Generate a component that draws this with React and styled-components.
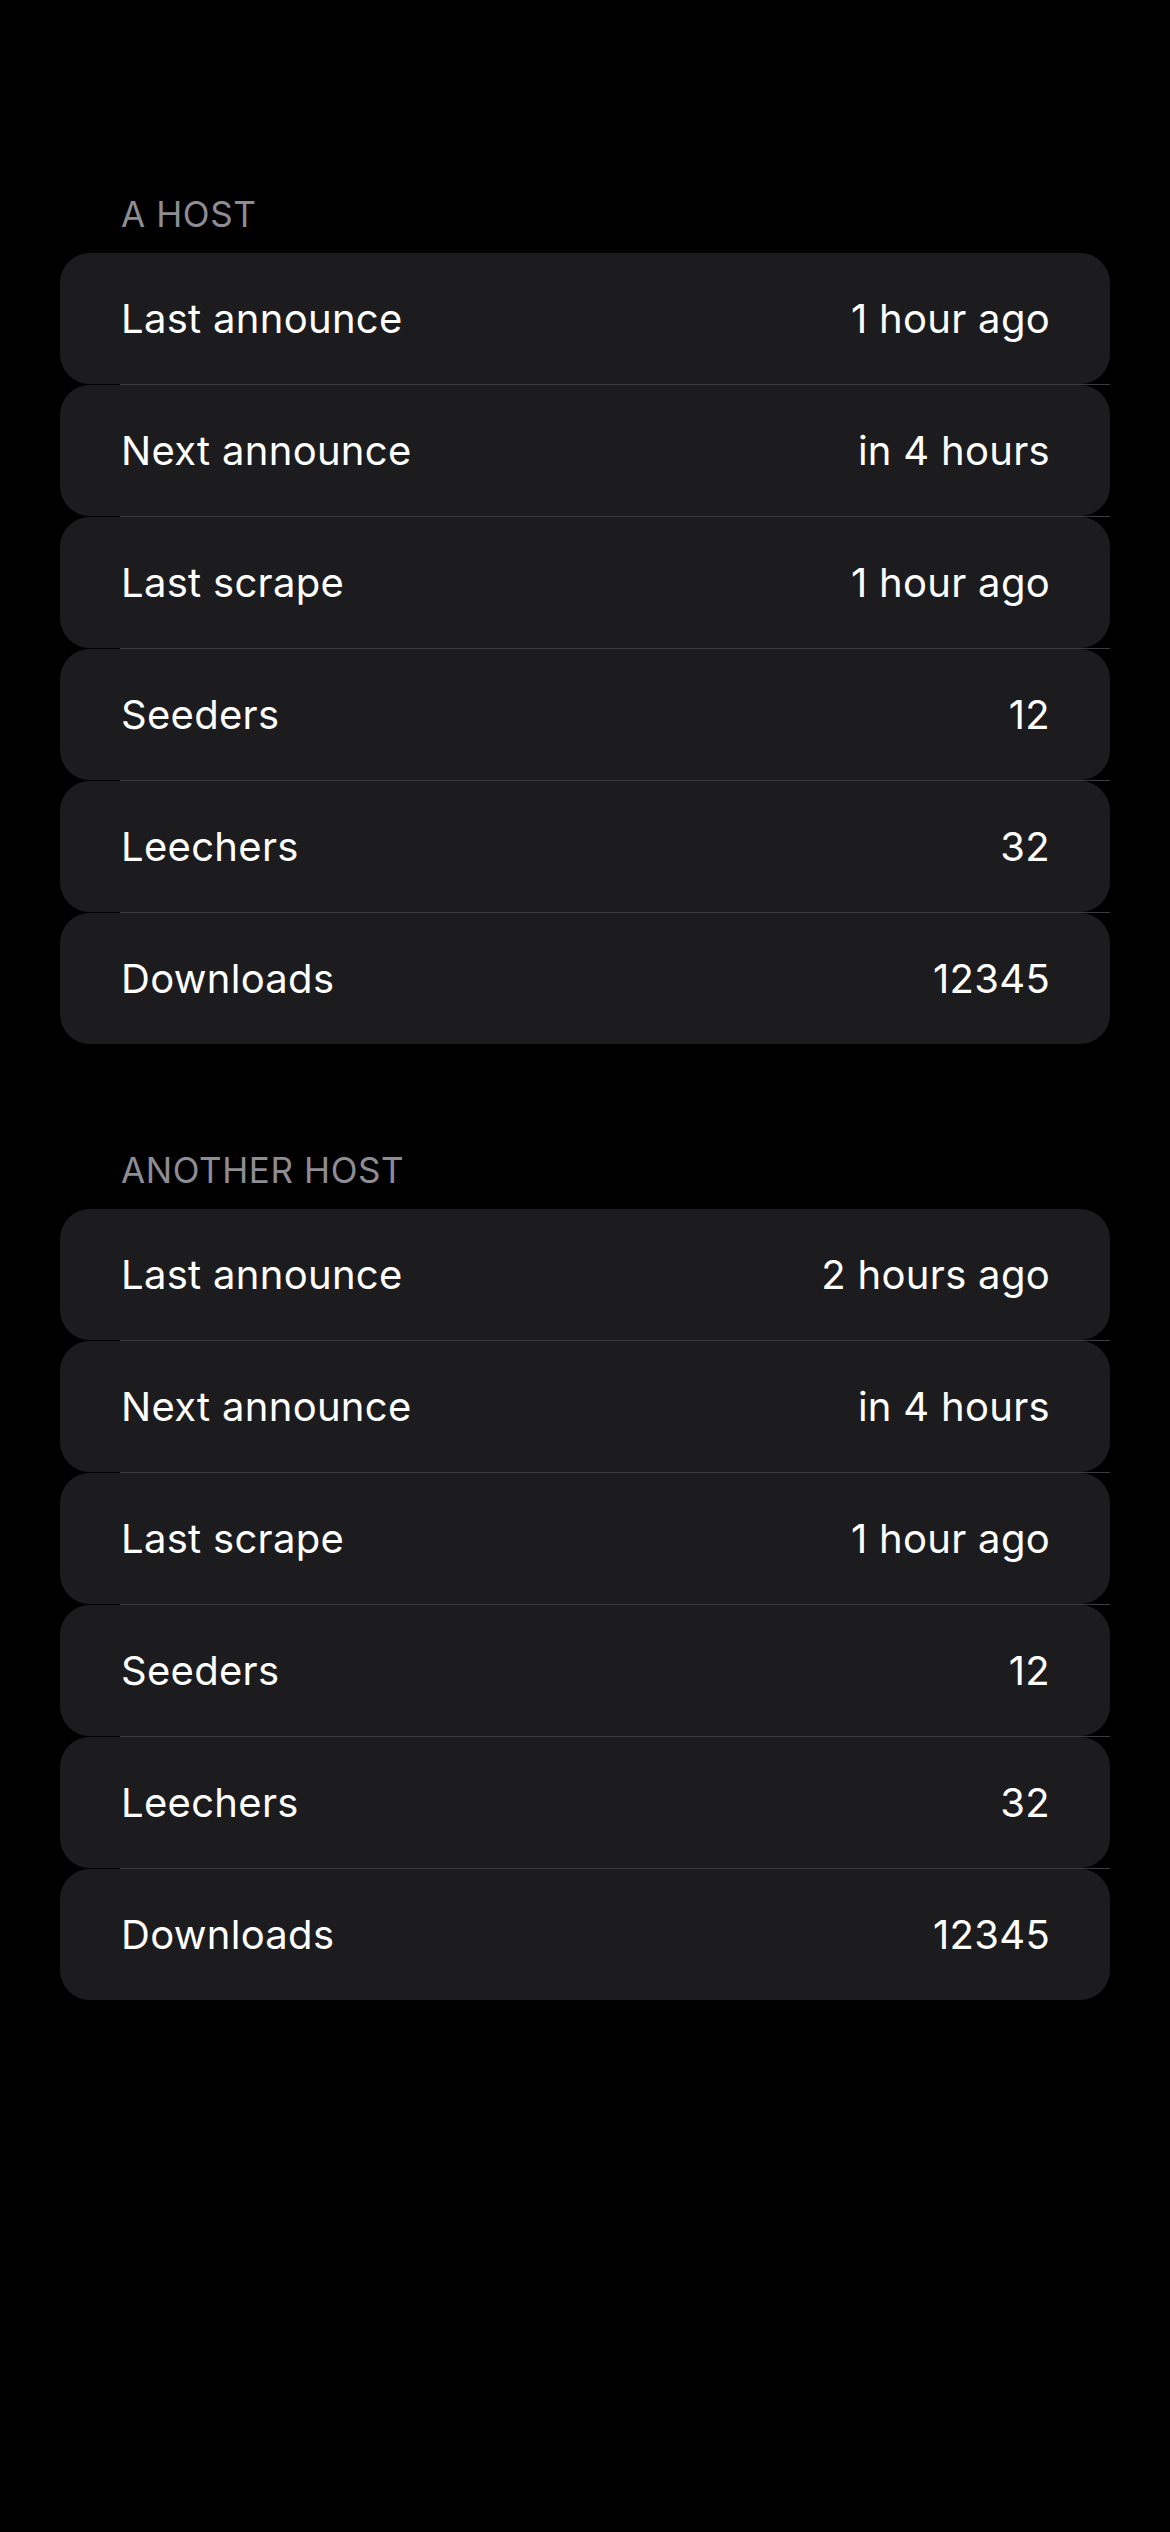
import React from "react";
import styled, { createGlobalStyle } from "styled-components";

const Global = createGlobalStyle`
  html, body { margin: 0; padding: 0; background: #000; }
  body { font-family: Inter, "Noto Sans", "Liberation Sans", sans-serif; -webkit-font-smoothing: antialiased; }
  #root { min-height: 2532px; background: #000; }
`;

const Page = styled.main`
  display: flex;
  flex-direction: column;
  gap: 106px;
  padding: 194px 60px 0;
`;

const Section = styled.section`
  display: flex;
  flex-direction: column;
`;

const SectionHeader = styled.h2`
  margin: 0 0 19px;
  padding-left: 61px;
  font-size: 35px;
  line-height: 40px;
  font-weight: 400;
  color: #8d8d93;
  text-transform: uppercase;
  letter-spacing: 0.6px;
`;

const List = styled.div`
  display: flex;
  flex-direction: column;
`;

const Row = styled.div`
  display: flex;
  align-items: center;
  justify-content: space-between;
  height: 131px;
  padding: 0 60px 0 61px;
  background: #1c1c1e;
  border-radius: 30px;
  font-size: 40px;
  letter-spacing: 0.3px;
  color: #fff;
`;

const Label = styled.span`
  font-weight: 400;
`;

const Value = styled.span`
  font-weight: 400;
  text-align: right;
`;

const Separator = styled.div`
  height: 1px;
  margin-left: 60px;
  background: #3b3b3f;
`;

const hosts = [
  {
    name: "A Host",
    rows: [
      ["Last announce", "1 hour ago"],
      ["Next announce", "in 4 hours"],
      ["Last scrape", "1 hour ago"],
      ["Seeders", "12"],
      ["Leechers", "32"],
      ["Downloads", "12345"],
    ],
  },
  {
    name: "Another Host",
    rows: [
      ["Last announce", "2 hours ago"],
      ["Next announce", "in 4 hours"],
      ["Last scrape", "1 hour ago"],
      ["Seeders", "12"],
      ["Leechers", "32"],
      ["Downloads", "12345"],
    ],
  },
];

export default function App() {
  return (
    <>
      <Global />
      <Page>
        {hosts.map((h) => (
          <Section key={h.name}>
            <SectionHeader>{h.name}</SectionHeader>
            <List>
              {h.rows.map(([l, v], i) => (
                <React.Fragment key={l}>
                  <Row>
                    <Label>{l}</Label>
                    <Value>{v}</Value>
                  </Row>
                  {i < h.rows.length - 1 && <Separator />}
                </React.Fragment>
              ))}
            </List>
          </Section>
        ))}
      </Page>
    </>
  );
}
